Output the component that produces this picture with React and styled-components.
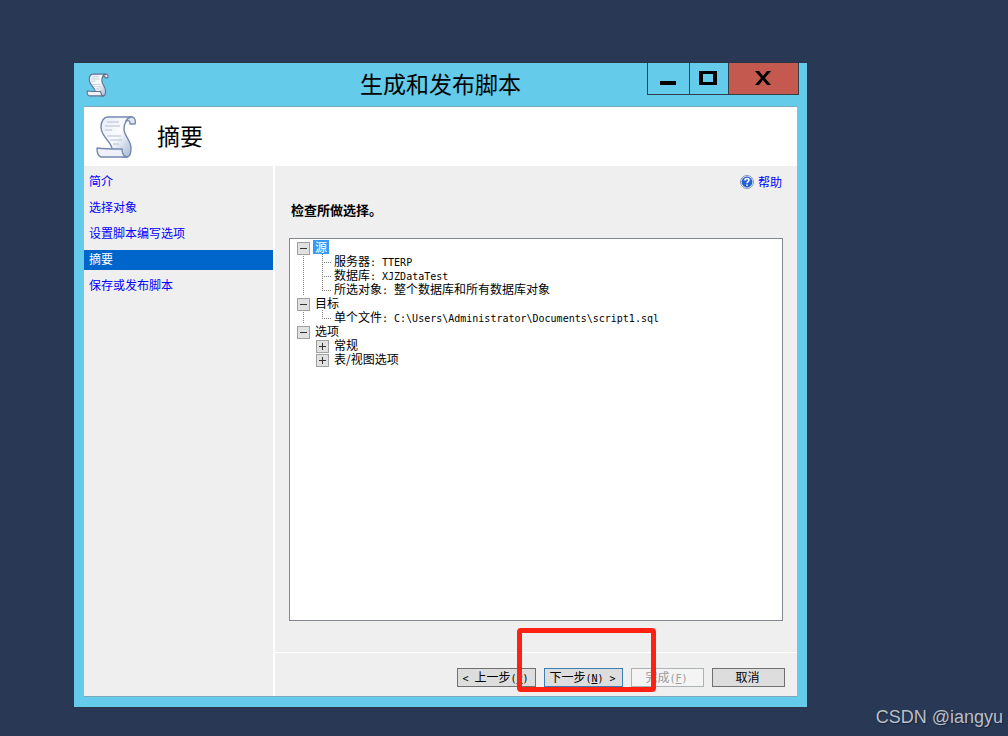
import React from "react";
import styled, { createGlobalStyle, css } from "styled-components";

const STEPS = ["简介", "选择对象", "设置脚本编写选项", "摘要", "保存或发布脚本"];

const SUMMARY = [
    {
        label: "源",
        isSelected: true,
        children: [
            { label: "服务器", value: "TTERP" },
            { label: "数据库", value: "XJZDataTest" },
            { label: "所选对象", value: "整个数据库和所有数据库对象", isWide: true },
        ],
    },
    {
        label: "目标",
        children: [
            { label: "单个文件", value: "C:\\Users\\Administrator\\Documents\\script1.sql" },
        ],
    },
    {
        label: "选项",
        children: [
            { label: "常规", isCollapsed: true },
            { label: "表/视图选项", isCollapsed: true },
        ],
    },
];

function ScrollIcon({ size, stroke = "#7389b0", strokeWidth = 1.4 }){
    return (
        <svg width={size} height={size} viewBox="0 0 44 44" aria-hidden="true">
            <defs>
                <linearGradient id={`paper-${size}`} x1="0" y1="0" x2="1" y2="1">
                    <stop offset="0" stopColor="#e6ecf5" />
                    <stop offset="0.5" stopColor="#fbfcfe" />
                    <stop offset="1" stopColor="#a3b3d1" />
                </linearGradient>
            </defs>
            <g stroke={stroke} strokeWidth={strokeWidth} strokeLinejoin="round">
                <path
                    fill={`url(#paper-${size})`}
                    d="M13 2H37C32 3 29 8 29 14C29 21 36 25 36 33C36 38 35 42 32 42H28L17 34C17 27 6 22 6 12C6 6 9 2 13 2Z"
                />
                <path fill="#dde5f0" d="M37 2C40 2 41 6 40 9H35C35 6 34 5 31 6C32 4 34 2 37 2Z" />
                <path fill="#eef2f8" d="M2 33C10 34 19 34 27 34C27 38 28 41 32 42H6C3 41 2 37 2 33Z" />
            </g>
            <path
                d="M12 7H24M10 11H25M10 15H17M12 21H26M15 25H27M18 29H24"
                stroke="#b3c0d6"
                strokeWidth="1.2"
            />
        </svg>
    );
}

function HelpIcon(){
    return (
        <svg width="14" height="14" viewBox="0 0 14 14" aria-hidden="true">
            <circle cx="7" cy="7" r="6.5" fill="#e8eef8" stroke="#8296b8" />
            <circle cx="7" cy="7" r="5.4" fill="#235fd0" />
            <path d="M3 5.5A4.3 4.3 0 0 1 11 5.5Q7 3.5 3 5.5Z" fill="#6f9cec" />
            <path d="M5 5.4C5 2.8 9 2.8 9 5.1C9 6.7 7 6.6 7 8.2" fill="none" stroke="#fff" strokeWidth="1.5" />
            <circle cx="7" cy="10.1" r="0.9" fill="#fff" />
        </svg>
    );
}

function TreeNode({ label, value, isWide, isSelected, isCollapsed, children }){
    const hasToggle = Boolean(children || isCollapsed);

    return (
        <Node>
            <NodeRow>
                {
                    hasToggle
                        ? <Toggle type="button" aria-label={label} aria-expanded={!isCollapsed} $collapsed={isCollapsed} />
                        : <Branch />
                }
                <NodeLabel $selected={isSelected}>
                    {label}
                    {value && <Mono>: </Mono>}
                    {value && (isWide ? value : <Mono>{value}</Mono>)}
                </NodeLabel>
            </NodeRow>
            {
                children && (
                    <Tree>
                        {children.map((child) => <TreeNode key={child.label} {...child} />)}
                    </Tree>
                )
            }
        </Node>
    );
}

function App(){
    const [current, setCurrent] = React.useState("摘要");

    return (
        <Desktop>
            <GlobalStyle />
            <Window>
                <TitleBar>
                    <ScrollIcon size={24} stroke="#5f7190" strokeWidth={2} />
                    <Title>生成和发布脚本</Title>
                    <Controls>
                        <ControlButton type="button" aria-label="最小化" $width={43}>
                            <svg width="18" height="14"><path d="M1 10H17V14H1Z" /></svg>
                        </ControlButton>
                        <ControlButton type="button" aria-label="最大化" $width={40}>
                            <svg width="18" height="14"><path d="M0 0H18V14H0ZM4 3V11H14V3Z" fillRule="evenodd" /></svg>
                        </ControlButton>
                        <ControlButton type="button" aria-label="关闭" $width={71} $danger>
                            <svg width="16" height="14"><path d="M0 0H4L8 5L12 0H16L10 7L16 14H12L8 9L4 14H0L6 7Z" /></svg>
                        </ControlButton>
                    </Controls>
                </TitleBar>

                <Wizard>
                    <PageHeader>
                        <ScrollIcon size={44} />
                        <h2>摘要</h2>
                    </PageHeader>

                    <Columns>
                        <Sidebar>
                            {
                                STEPS.map((step) => (
                                    <StepLink
                                        key={step}
                                        href="#"
                                        $active={step === current}
                                        onClick={() => setCurrent(step)}
                                    >
                                        {step}
                                    </StepLink>
                                ))
                            }
                        </Sidebar>

                        <Main>
                            <Content>
                                <HelpLink href="#">
                                    <HelpIcon />
                                    帮助
                                </HelpLink>
                                <Caption>检查所做选择。</Caption>
                                <TreeBox>
                                    <Tree $root>
                                        {SUMMARY.map((node) => <TreeNode key={node.label} {...node} />)}
                                    </Tree>
                                </TreeBox>
                            </Content>

                            <Footer>
                                <WizardButton type="button" $wide>
                                    <Mono>&lt; </Mono>上一步<Mono>(<u>P</u>)</Mono>
                                </WizardButton>
                                <Highlighted>
                                    <WizardButton type="button" $wide $primary>
                                        下一步<Mono>(<u>N</u>) &gt;</Mono>
                                    </WizardButton>
                                </Highlighted>
                                <WizardButton type="button" disabled>
                                    完成<Mono>(<u>F</u>)</Mono>
                                </WizardButton>
                                <WizardButton type="button">取消</WizardButton>
                            </Footer>
                        </Main>
                    </Columns>
                </Wizard>
            </Window>
            <Watermark>CSDN @iangyu</Watermark>
        </Desktop>
    );
}

const GlobalStyle = createGlobalStyle`
    *{
        box-sizing: border-box;
    }

    body{
        margin: 0;
        background-color: #293955;
        color: #000;
        font-family: "Noto Sans CJK SC", sans-serif;
        font-size: 12px;
        line-height: 14px;
    }

    button{
        font: inherit;
        color: inherit;
    }

    a{
        color: #00f;
        text-decoration: none;
    }

    svg{
        display: block;
        flex-shrink: 0;
    }
`;

const Desktop = styled.div`
    position: relative;
    display: flex;
    min-height: 100vh;
    padding: 63px 201px 29px 74px;
`;

const Window = styled.section`
    flex: 1;
    display: flex;
    flex-direction: column;
    padding: 0 10px 10px;
    background-color: #65cbea;
    box-shadow: 0 0 0 1px #2b3644;
`;

const TitleBar = styled.header`
    display: grid;
    grid-template-columns: 1fr auto 1fr;
    align-items: center;
    height: 43px;
    padding-left: 2px;
`;

const Title = styled.h1`
    margin: 0;
    padding: 0 2px 4px 0;
    font-size: 23px;
    line-height: 32px;
    font-weight: 400;
`;

const Controls = styled.div`
    display: flex;
    align-self: start;
    justify-self: end;
    margin-right: -2px;
`;

const ControlButton = styled.button`
    display: grid;
    place-items: center;
    width: ${({ $width }) => $width}px;
    height: 32px;
    padding: 0 2px 2px 0;
    border: 1px solid #2f3f4c;
    border-top: none;
    background-color: ${({ $danger }) => $danger ? "#c3594f" : "transparent"};

    & + &{
        margin-left: -1px;
    }
`;

const Wizard = styled.div`
    flex: 1;
    display: flex;
    flex-direction: column;
    border-top: 1px solid #7ba9bd;
    border-bottom: 1px solid #7ba9bd;
    background-color: #efefef;
`;

const PageHeader = styled.div`
    display: flex;
    align-items: center;
    gap: 18px;
    height: 59px;
    padding-left: 11px;
    background-color: #fff;

    h2{
        margin: 0;
        padding-bottom: 4px;
        font-size: 23px;
        line-height: 32px;
        font-weight: 400;
    }
`;

const Columns = styled.div`
    flex: 1;
    display: flex;
`;

const Sidebar = styled.nav`
    display: flex;
    flex-direction: column;
    gap: 6px;
    width: 191px;
    padding-top: 6px;
    border-right: 2px solid #fff;
`;

const StepLink = styled.a`
    padding: 0 5px 2px;
    line-height: 18px;

    ${({ $active }) => $active && css`
        background-color: #0066cc;
        color: #fff;
    `}
`;

const Main = styled.main`
    flex: 1;
    display: flex;
    flex-direction: column;
`;

const Content = styled.div`
    flex: 1;
    display: flex;
    flex-direction: column;
    padding: 6px 14px 31px;
`;

const HelpLink = styled.a`
    align-self: flex-end;
    display: flex;
    align-items: center;
    gap: 4px;
    padding-right: 1px;
    line-height: 20px;
`;

const Caption = styled.h3`
    margin: 8px 2px 18px;
    font-size: 13px;
    line-height: 20px;
    font-weight: 700;
`;

const TreeBox = styled.div`
    flex: 1;
    padding: 1px 7px;
    border: 1px solid #828790;
    background-color: #fff;
`;

const dotsDown = "repeating-linear-gradient(to bottom, #808080 0 1px, transparent 1px 2px)";
const dotsAcross = "repeating-linear-gradient(to right, #808080 0 1px, transparent 1px 2px)";

const Node = styled.li`
    list-style: none;
`;

const Branch = styled.span`
    flex-shrink: 0;
    width: 16px;
    height: 14px;
    background: ${dotsDown} 6px 0 / 1px 14px no-repeat,
                ${dotsAcross} 6px 8px / 9px 1px no-repeat;
`;

const Tree = styled.ul`
    margin: 0;
    padding: 0 0 0 ${({ $root }) => $root ? 0 : 19}px;

    /* the dotted trunk stops at the last node */
    ${({ $root }) => $root ? css`
        & > ${Node}:not(:last-child){
            background: ${dotsDown} 6px 8px / 1px 100% no-repeat;
        }
    ` : css`
        & > ${Node}:last-child ${Branch}{
            background-size: 1px 8px, 9px 1px;
        }
    `}
`;

const NodeRow = styled.div`
    display: flex;
    height: 14px;
`;

const Toggle = styled.button`
    flex-shrink: 0;
    width: 13px;
    height: 13px;
    margin: 2px 3px 0 0;
    padding: 0;
    border: 1px solid #a0a0a0;
    background: linear-gradient(#333, #333) center / 7px 1px no-repeat,
                linear-gradient(#333, #333) center / 1px ${({ $collapsed }) => $collapsed ? 7 : 0}px no-repeat,
                #e1e1e1;
`;

const NodeLabel = styled.span`
    padding: 0 2px;
    white-space: nowrap;

    ${({ $selected }) => $selected && css`
        background-color: #3399ff;
        color: #fff;
    `}
`;

const Mono = styled.span`
    font-family: "DejaVu Sans Mono", monospace;
    font-size: 10px;
    line-height: 10px;
    white-space: pre;
`;

const Footer = styled.footer`
    display: flex;
    justify-content: flex-end;
    gap: 8px;
    padding: 15px 12px 9px;
    border-top: 1px solid #fff;
`;

const WizardButton = styled.button`
    display: block;
    width: ${({ $wide }) => $wide ? 79 : 73}px;
    height: 19px;
    padding: 0 2px 2px 0;
    border: 1px solid ${({ $primary }) => $primary ? "#3c7fb1" : "#707070"};
    background-color: #ddd;
    line-height: 15px;
    white-space: nowrap;

    &:disabled{
        border-color: #adb2b5;
        background-color: #f4f4f4;
        color: #9a9a9a;
    }
`;

const Highlighted = styled.div`
    position: relative;

    &::after{
        content: "";
        position: absolute;
        inset: -40px -33px -5px -27px;
        border: 5px solid #ff2213;
        border-radius: 4px;
        pointer-events: none;
        z-index: 1;
    }
`;

const Watermark = styled.span`
    position: absolute;
    right: 5px;
    bottom: 8px;
    color: #b9bec8;
    font-family: "Liberation Sans", Arial, sans-serif;
    font-size: 18px;
    line-height: 22px;
    text-shadow: 1px 1px 1px #1a2438;
`;

export default App;
